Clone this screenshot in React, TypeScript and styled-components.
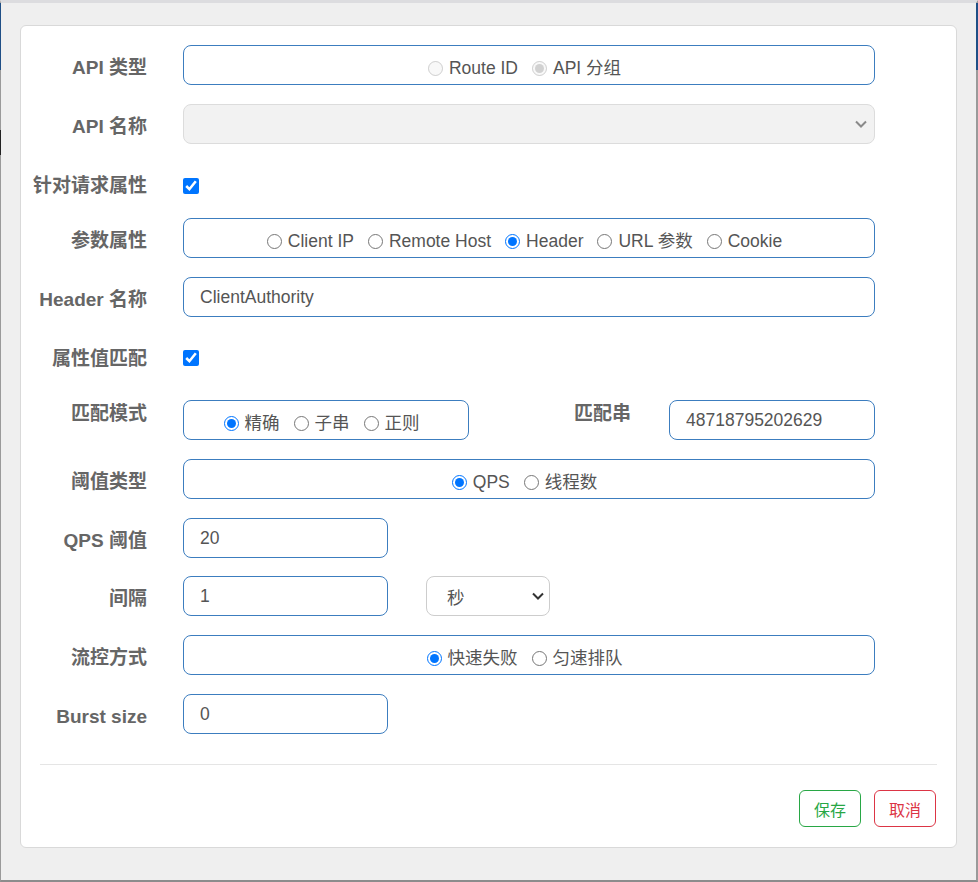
import styled, {createGlobalStyle} from 'styled-components';

const GlobalStyle = createGlobalStyle`
  html, body {
    margin: 0;
    padding: 0;
    background: #efefef;
  }
  * {
    box-sizing: border-box;
  }
`;

const FONT = `"Liberation Sans", "Noto Sans CJK SC", sans-serif`;
const BLUE = '#3c7dbf';

const Frame = styled.div`
  position: relative;
  width: 978px;
  height: 882px;
  padding: 22px 19px 0 19px;
  background: #efefef;
  border-top: 3px solid #dcdcdf;
  border-left: 1px solid #9a9a9a;
  border-right: 2px solid #9a9a9a;
  border-bottom: 2px solid #8c8c8c;
  font-family: ${FONT};

  &::before {
    content: '';
    position: absolute;
    left: -1px;
    top: 0;
    width: 1px;
    height: 160px;
    background: linear-gradient(
      to bottom,
      #1f4f86 0 67px,
      #9a9a9a 67px 127px,
      #222 127px 152px,
      #9a9a9a 152px
    );
  }

  &::after {
    content: '';
    position: absolute;
    right: -2px;
    top: 0;
    width: 2px;
    height: 67px;
    background: #1f4f86;
  }
`;

const Card = styled.div`
  height: 823px;
  padding-top: 19px;
  background: #fff;
  border: 1px solid #d9d9d9;
  border-radius: 6px;
  display: flex;
  flex-direction: column;
`;

const Form = styled.div`
  display: flex;
  flex-direction: column;
`;

const Row = styled.div<{$h?: number; $mb?: number}>`
  display: flex;
  height: ${({$h}) => $h ?? 40}px;
  margin-bottom: ${({$mb}) => $mb ?? 19}px;

  &:last-child {
    margin-bottom: 0;
  }
`;

const Label = styled.div<{$top?: number; $gapLeft?: number}>`
  flex-shrink: 0;
  width: 126px;
  margin-left: ${({$gapLeft}) => $gapLeft ?? 0}px;
  margin-right: ${({$gapLeft}) => ($gapLeft ? 38 : 36)}px;
  padding-top: ${({$top}) => $top ?? 9}px;
  text-align: right;
  white-space: nowrap;
  font-size: 19px;
  font-weight: 700;
  line-height: 27px;
  color: #666;
`;

const Field = styled.div`
  width: 692px;
  display: flex;
  align-items: flex-start;
`;

const RadioBox = styled.div<{$w?: number}>`
  ${({$w}) => ($w ? `width: ${$w}px; flex-shrink: 0;` : 'flex: 1;')}
  height: 40px;
  padding: 6px 9px 0 0;
  display: flex;
  align-items: center;
  justify-content: center;
  gap: 14px;
  border: 1px solid ${BLUE};
  border-radius: 8px;
`;

const RadioItem = styled.label`
  display: inline-flex;
  align-items: center;
  gap: 6px;
  font-size: 17.5px;
  line-height: 24px;
  color: #555;
  white-space: nowrap;
`;

const Radio = styled.input.attrs({type: 'radio'})`
  width: 15px;
  height: 15px;
  margin: 0;
`;

const TextInput = styled.input<{$w?: number}>`
  ${({$w}) => ($w ? `width: ${$w}px; flex-shrink: 0;` : 'flex: 1; min-width: 0;')}
  height: 40px;
  padding: 0 16px;
  border: 1px solid ${BLUE};
  border-radius: 8px;
  outline: none;
  background: #fff;
  font-family: ${FONT};
  font-size: 17.5px;
  color: #555;
`;

const SelectBox = styled.div<{$w?: number; $disabled?: boolean}>`
  ${({$w}) => ($w ? `width: ${$w}px; flex-shrink: 0;` : 'flex: 1;')}
  height: 40px;
  margin-left: ${({$w}) => ($w ? 38 : 0)}px;
  padding: 0 5px 0 20px;
  display: flex;
  align-items: center;
  justify-content: space-between;
  border: 1px solid ${({$disabled}) => ($disabled ? '#dcdcdc' : '#cdcdcd')};
  border-radius: 8px;
  background: ${({$disabled}) => ($disabled ? '#f2f2f2' : '#fff')};
  font-size: 17.5px;
  color: #555;
`;

const Chevron = styled.svg<{$muted?: boolean}>`
  width: 12px;
  height: 8px;
  margin-right: ${({$muted}) => ($muted ? 2 : 0)}px;
  stroke: ${({$muted}) => ($muted ? '#8a8a8a' : '#333')};
`;

const CheckField = styled.div<{$top: number}>`
  padding-top: ${({$top}) => $top}px;
`;

const Checkbox = styled.input.attrs({type: 'checkbox'})`
  display: block;
  width: 16px;
  height: 16px;
  margin: 0;
`;

const Divider = styled.div`
  height: 1px;
  margin: 30px 19px 0 19px;
  background: #e5e5e5;
`;

const Footer = styled.div`
  display: flex;
  justify-content: flex-end;
  gap: 13px;
  padding: 25px 20px 0;
`;

const Button = styled.button<{$color: string}>`
  height: 37px;
  padding: 0 14px;
  background: #fff;
  border: 1px solid ${({$color}) => $color};
  border-radius: 6px;
  color: ${({$color}) => $color};
  font-family: ${FONT};
  font-size: 16px;
  cursor: pointer;
`;

const ChevronIcon = ({muted}: {muted?: boolean}) => (
  <Chevron $muted={muted} viewBox="0 0 12 8" fill="none" strokeWidth={2}>
    <path d="M1 1.5 L6 6.5 L11 1.5" />
  </Chevron>
);

type Option = {label: string; checked?: boolean};

const RadioGroup = ({
  name,
  options,
  width,
  disabled,
}: {
  name: string;
  options: Option[];
  width?: number;
  disabled?: boolean;
}) => (
  <RadioBox $w={width}>
    {options.map((o) => (
      <RadioItem key={o.label}>
        <Radio name={name} defaultChecked={o.checked} disabled={disabled} />
        {o.label}
      </RadioItem>
    ))}
  </RadioBox>
);

const App = () => {
  return (
    <>
      <GlobalStyle />
      <Frame>
        <Card>
          <Form>
            <Row>
              <Label>API 类型</Label>
              <Field>
                <RadioGroup
                  name="apiType"
                  disabled
                  options={[{label: 'Route ID'}, {label: 'API 分组', checked: true}]}
                />
              </Field>
            </Row>
            <Row>
              <Label>API 名称</Label>
              <Field>
                <SelectBox $disabled>
                  <span />
                  <ChevronIcon muted />
                </SelectBox>
              </Field>
            </Row>
            <Row $h={36}>
              <Label>针对请求属性</Label>
              <Field>
                <CheckField $top={15}>
                  <Checkbox defaultChecked />
                </CheckField>
              </Field>
            </Row>
            <Row>
              <Label>参数属性</Label>
              <Field>
                <RadioGroup
                  name="paramType"
                  options={[
                    {label: 'Client IP'},
                    {label: 'Remote Host'},
                    {label: 'Header', checked: true},
                    {label: 'URL 参数'},
                    {label: 'Cookie'},
                  ]}
                />
              </Field>
            </Row>
            <Row>
              <Label>Header 名称</Label>
              <Field>
                <TextInput defaultValue="ClientAuthority" />
              </Field>
            </Row>
            <Row $h={45}>
              <Label>属性值匹配</Label>
              <Field>
                <CheckField $top={14}>
                  <Checkbox defaultChecked />
                </CheckField>
              </Field>
            </Row>
            <Row>
              <Label $top={0}>匹配模式</Label>
              <Field>
                <RadioGroup
                  name="matchMode"
                  width={286}
                  options={[{label: '精确', checked: true}, {label: '子串'}, {label: '正则'}]}
                />
                <Label $top={0} $gapLeft={36}>
                  匹配串
                </Label>
                <TextInput defaultValue="48718795202629" />
              </Field>
            </Row>
            <Row>
              <Label>阈值类型</Label>
              <Field>
                <RadioGroup
                  name="gradeType"
                  options={[{label: 'QPS', checked: true}, {label: '线程数'}]}
                />
              </Field>
            </Row>
            <Row $mb={18}>
              <Label>QPS 阈值</Label>
              <Field>
                <TextInput $w={205} defaultValue="20" />
              </Field>
            </Row>
            <Row>
              <Label>间隔</Label>
              <Field>
                <TextInput $w={205} defaultValue="1" />
                <SelectBox $w={124}>
                  <span>秒</span>
                  <ChevronIcon />
                </SelectBox>
              </Field>
            </Row>
            <Row>
              <Label>流控方式</Label>
              <Field>
                <RadioGroup
                  name="controlBehavior"
                  options={[{label: '快速失败', checked: true}, {label: '匀速排队'}]}
                />
              </Field>
            </Row>
            <Row>
              <Label>Burst size</Label>
              <Field>
                <TextInput $w={205} defaultValue="0" />
              </Field>
            </Row>
          </Form>
          <Divider />
          <Footer>
            <Button $color="#28a745">保存</Button>
            <Button $color="#dc3545">取消</Button>
          </Footer>
        </Card>
      </Frame>
    </>
  );
};

export default App;
